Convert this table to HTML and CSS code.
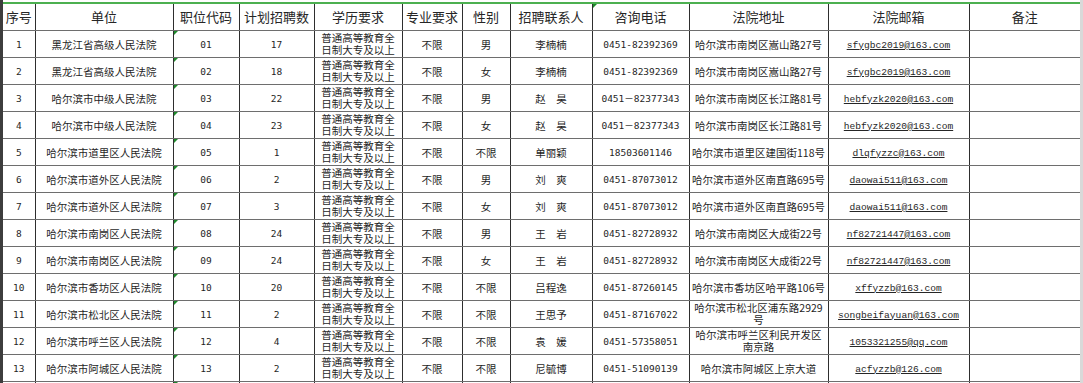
FILE: index.html
```
<!DOCTYPE html>
<html lang="zh">
<head>
<meta charset="utf-8">
<title>招聘信息表</title>
<link rel="stylesheet" href="styles.css">
</head>
<body>
<div class="frame">
  <div class="strip-left"></div>
  <div class="sheet">
    <table class="grid">
      <colgroup>
        <col class="c1"><col class="c2"><col class="c3"><col class="c4"><col class="c5"><col class="c6"><col class="c7"><col class="c8"><col class="c9"><col class="c10"><col class="c11"><col class="c12">
      </colgroup>
      <thead>
        <tr>
          <th>序号</th><th>单位</th><th>职位代码</th><th>计划招聘数</th><th>学历要求</th><th>专业要求</th><th>性别</th><th>招聘联系人</th><th class="mk">咨询电话</th><th>法院地址</th><th>法院邮箱</th><th class="last">备注</th>
        </tr>
      </thead>
      <tbody>
        <tr><td class="n">1</td><td>黑龙江省高级人民法院</td><td class="n mk">01</td><td class="n">17</td><td class="two"><span class="ln">普通高等教育全</span><span class="ln">日制大专及以上</span></td><td>不限</td><td>男</td><td>李楠楠</td><td class="n">0451-82392369</td><td>哈尔滨市南岗区嵩山路27号</td><td class="em"><span>sfygbc2019@163.com</span></td><td class="last"></td></tr>
        <tr><td class="n">2</td><td>黑龙江省高级人民法院</td><td class="n mk">02</td><td class="n">18</td><td class="two"><span class="ln">普通高等教育全</span><span class="ln">日制大专及以上</span></td><td>不限</td><td>女</td><td>李楠楠</td><td class="n">0451-82392369</td><td>哈尔滨市南岗区嵩山路27号</td><td class="em"><span>sfygbc2019@163.com</span></td><td class="last"></td></tr>
        <tr><td class="n">3</td><td>哈尔滨市中级人民法院</td><td class="n mk">03</td><td class="n">22</td><td class="two"><span class="ln">普通高等教育全</span><span class="ln">日制大专及以上</span></td><td>不限</td><td>男</td><td>赵　昊</td><td class="n">0451－82377343</td><td>哈尔滨市南岗区长江路81号</td><td class="em"><span>hebfyzk2020@163.com</span></td><td class="last"></td></tr>
        <tr><td class="n">4</td><td>哈尔滨市中级人民法院</td><td class="n mk">04</td><td class="n">23</td><td class="two"><span class="ln">普通高等教育全</span><span class="ln">日制大专及以上</span></td><td>不限</td><td>女</td><td>赵　昊</td><td class="n">0451－82377343</td><td>哈尔滨市南岗区长江路81号</td><td class="em"><span>hebfyzk2020@163.com</span></td><td class="last"></td></tr>
        <tr><td class="n">5</td><td>哈尔滨市道里区人民法院</td><td class="n mk">05</td><td class="n">1</td><td class="two"><span class="ln">普通高等教育全</span><span class="ln">日制大专及以上</span></td><td>不限</td><td>不限</td><td>单丽颖</td><td class="n">18503601146</td><td>哈尔滨市道里区建国街118号</td><td class="em"><span>dlqfyzzc@163.com</span></td><td class="last"></td></tr>
        <tr><td class="n">6</td><td>哈尔滨市道外区人民法院</td><td class="n mk">06</td><td class="n">2</td><td class="two"><span class="ln">普通高等教育全</span><span class="ln">日制大专及以上</span></td><td>不限</td><td>男</td><td>刘　爽</td><td class="n">0451-87073012</td><td>哈尔滨市道外区南直路695号</td><td class="em"><span>daowai511@163.com</span></td><td class="last"></td></tr>
        <tr><td class="n">7</td><td>哈尔滨市道外区人民法院</td><td class="n mk">07</td><td class="n">3</td><td class="two"><span class="ln">普通高等教育全</span><span class="ln">日制大专及以上</span></td><td>不限</td><td>女</td><td>刘　爽</td><td class="n">0451-87073012</td><td>哈尔滨市道外区南直路695号</td><td class="em"><span>daowai511@163.com</span></td><td class="last"></td></tr>
        <tr><td class="n">8</td><td>哈尔滨市南岗区人民法院</td><td class="n mk">08</td><td class="n">24</td><td class="two"><span class="ln">普通高等教育全</span><span class="ln">日制大专及以上</span></td><td>不限</td><td>男</td><td>王　岩</td><td class="n">0451-82728932</td><td>哈尔滨市南岗区大成街22号</td><td class="em"><span>nf82721447@163.com</span></td><td class="last"></td></tr>
        <tr><td class="n">9</td><td>哈尔滨市南岗区人民法院</td><td class="n mk">09</td><td class="n">24</td><td class="two"><span class="ln">普通高等教育全</span><span class="ln">日制大专及以上</span></td><td>不限</td><td>女</td><td>王　岩</td><td class="n">0451-82728932</td><td>哈尔滨市南岗区大成街22号</td><td class="em"><span>nf82721447@163.com</span></td><td class="last"></td></tr>
        <tr><td class="n">10</td><td>哈尔滨市香坊区人民法院</td><td class="n mk">10</td><td class="n">20</td><td class="two"><span class="ln">普通高等教育全</span><span class="ln">日制大专及以上</span></td><td>不限</td><td>不限</td><td>吕程逸</td><td class="n">0451-87260145</td><td>哈尔滨市香坊区哈平路106号</td><td class="em"><span>xffyzzb@163.com</span></td><td class="last"></td></tr>
        <tr><td class="n">11</td><td>哈尔滨市松北区人民法院</td><td class="n mk">11</td><td class="n">2</td><td class="two"><span class="ln">普通高等教育全</span><span class="ln">日制大专及以上</span></td><td>不限</td><td>不限</td><td>王思予</td><td class="n">0451-87167022</td><td class="two"><span class="ln">哈尔滨市松北区浦东路2929</span><span class="ln">号</span></td><td class="em"><span>songbeifayuan@163.com</span></td><td class="last"></td></tr>
        <tr><td class="n">12</td><td>哈尔滨市呼兰区人民法院</td><td class="n mk">12</td><td class="n">4</td><td class="two"><span class="ln">普通高等教育全</span><span class="ln">日制大专及以上</span></td><td>不限</td><td>不限</td><td>袁　媛</td><td class="n">0451-57358051</td><td class="two"><span class="ln">哈尔滨市呼兰区利民开发区</span><span class="ln">南京路</span></td><td class="em"><span>1053321255@qq.com</span></td><td class="last"></td></tr>
        <tr><td class="n">13</td><td>哈尔滨市阿城区人民法院</td><td class="n mk">13</td><td class="n">2</td><td class="two"><span class="ln">普通高等教育全</span><span class="ln">日制大专及以上</span></td><td>不限</td><td>不限</td><td>尼毓博</td><td class="n">0451-51090139</td><td>哈尔滨市阿城区上京大道</td><td class="em"><span>acfyzzb@126.com</span></td><td class="last"></td></tr>
        <tr class="cut"><td></td><td></td><td class="mk"></td><td></td><td></td><td></td><td></td><td></td><td></td><td></td><td></td><td class="last"></td></tr>
      </tbody>
    </table>
  </div>
  <div class="strip-right"></div>
</div>
</body>
</html>
```

FILE: styles.css
```
html, body {
  margin: 0;
  padding: 0;
  background: #ffffff;
  overflow: hidden;
}

.frame {
  display: flex;
  width: 1083px;
  height: 383px;
  overflow: hidden;
}

.strip-left {
  width: 3px;
  flex: none;
  background: #3d3d3d;
}

.strip-right {
  width: 3px;
  flex: none;
  background: #d9d9d9;
}

.sheet {
  width: 1077px;
  flex: none;
  padding-top: 2px;
}

.grid {
  width: 1077px;
  table-layout: fixed;
  border-collapse: collapse;
  border-top: 2px solid #4cb050;
  font-family: "Noto Sans CJK SC", "Liberation Sans", sans-serif;
  font-size: 10.5px;
  color: #1f1f1f;
}

.c1 { width: 32px; }
.c2 { width: 138px; }
.c3 { width: 66px; }
.c4 { width: 75px; }
.c5 { width: 88px; }
.c6 { width: 60px; }
.c7 { width: 48px; }
.c8 { width: 82px; }
.c9 { width: 97px; }
.c10 { width: 139px; }
.c11 { width: 141px; }
.c12 { width: 111px; }

.grid th,
.grid td {
  padding: 0;
  text-align: center;
  vertical-align: middle;
  border-right: 1px solid #2e2e2e;
  border-bottom: 1px solid #6e6e6e;
  white-space: nowrap;
  overflow: hidden;
  position: relative;
}

.grid th {
  height: 26px;
  font-size: 13px;
  font-weight: normal;
  color: #262626;
  line-height: 16px;
}

.grid td {
  height: 26px;
  line-height: 13px;
}

.grid .last {
  border-right: none;
}

.n {
  font-family: "DejaVu Sans Mono", "Noto Sans CJK SC", monospace;
  font-size: 9.5px;
}

.ln {
  display: block;
  height: 12.5px;
  line-height: 12.5px;
  overflow: visible;
}

.em span {
  font-family: "Liberation Mono", monospace;
  font-size: 9.6px;
  text-decoration: underline;
  color: #262626;
}

.mk::before {
  content: "";
  position: absolute;
  left: 0;
  top: 0;
  width: 0;
  height: 0;
  border-top: 4px solid #1f8a2c;
  border-right: 4px solid transparent;
}

.cut td {
  height: 4px;
  border-bottom: none;
}
```
